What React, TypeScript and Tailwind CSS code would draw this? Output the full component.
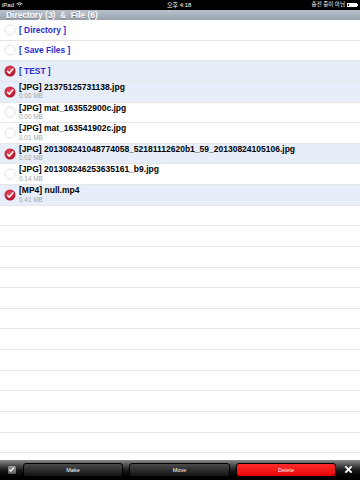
const font = { fontFamily: '"Liberation Sans", "Noto Sans CJK KR", Arial, sans-serif' };

type Row = { kind: "dir" | "file" | "empty"; name?: string; size?: string; checked?: boolean };

const rows: Row[] = [
  { kind: "dir", name: "[ Directory ]" },
  { kind: "dir", name: "[ Save Files ]" },
  { kind: "dir", name: "[ TEST ]", checked: true },
  { kind: "file", name: "[JPG] 21375125731138.jpg", size: "0.00 MB", checked: true },
  { kind: "file", name: "[JPG] mat_163552900c.jpg", size: "0.00 MB" },
  { kind: "file", name: "[JPG] mat_163541902c.jpg", size: "0.01 MB" },
  { kind: "file", name: "[JPG] 201308241048774058_52181112620b1_59_20130824105106.jpg", size: "0.02 MB", checked: true },
  { kind: "file", name: "[JPG] 201308246253635161_b9.jpg", size: "0.14 MB" },
  { kind: "file", name: "[MP4] null.mp4", size: "6.41 MB", checked: true },
  ...Array.from({ length: 14 }, () => ({ kind: "empty" as const })),
];

function CheckCircle({ checked }: { checked?: boolean }) {
  if (!checked) {
    return (
      <svg width="12" height="12" viewBox="0 0 12 12">
        <circle cx="6" cy="6" r="5" fill="#fff" stroke="#d6d6d6" strokeWidth="0.8" />
      </svg>
    );
  }
  return (
    <svg width="12" height="12" viewBox="0 0 12 12">
      <defs>
        <radialGradient id="rg" cx="45%" cy="35%" r="65%">
          <stop offset="0%" stopColor="#e8485a" />
          <stop offset="100%" stopColor="#b0122a" />
        </radialGradient>
      </defs>
      <circle cx="6" cy="6" r="5.5" fill="url(#rg)" />
      <path d="M3.4 6.2 L5.3 8.1 L8.8 3.9" fill="none" stroke="#fff" strokeWidth="1.5" strokeLinecap="round" strokeLinejoin="round" />
    </svg>
  );
}

function StatusBar() {
  return (
    <div className="h-[9.5px] bg-black flex items-center justify-between px-[2px] text-white text-[6px] leading-none relative">
      <div className="flex items-center gap-[2px]">
        <span>iPad</span>
        <svg width="7" height="5" viewBox="0 0 14 10">
          <path d="M1 4 Q7 -1.5 13 4" fill="none" stroke="#fff" strokeWidth="1.6" />
          <path d="M3.5 6 Q7 3 10.5 6" fill="none" stroke="#fff" strokeWidth="1.6" />
          <path d="M5.6 8 L7 9.5 L8.4 8 Q7 6.8 5.6 8 Z" fill="#fff" />
        </svg>
      </div>
      <span className="absolute left-[167px]">오후 4:18</span>
      <div className="flex items-center gap-[2px]">
        <span className="text-[5.5px]">충전 중이 아님</span>
        <div className="flex items-center">
          <div className="w-[10px] h-[4.5px] border border-white p-[0.5px]">
            <div className="w-full h-full bg-white" />
          </div>
          <div className="w-[1px] h-[2px] bg-white" />
        </div>
      </div>
    </div>
  );
}

function Toolbar() {
  const btn = "h-[14px] rounded-[3px] flex items-center justify-center text-white text-[5.5px] border border-black";
  return (
    <div className="h-[20.5px] bg-gradient-to-b from-[#8a8a8a] via-[#1c1c1c] to-black flex items-center">
      <div className="w-[23px] flex justify-center">
        <div className="w-[8px] h-[8px] rounded-[1.5px] bg-gradient-to-b from-[#9a9a9a] to-[#5e5e5e] flex items-center justify-center">
          <svg width="7" height="7" viewBox="0 0 10 10">
            <path d="M2 5.2 L4.2 7.4 L8.4 2.4" fill="none" stroke="#fff" strokeWidth="1.8" />
          </svg>
        </div>
      </div>
      <div className={`${btn} w-[100px] bg-gradient-to-b from-[#4a4a4a] to-[#141414]`}>Make</div>
      <div className={`${btn} w-[101px] ml-[6px] bg-gradient-to-b from-[#4a4a4a] to-[#141414]`}>Move</div>
      <div className={`${btn} w-[100px] ml-[6px] bg-gradient-to-b from-[#ff2a2a] to-[#e60000] border-[#900]`}>Delete</div>
      <div className="flex-1 flex justify-center">
        <svg width="9" height="9" viewBox="0 0 10 10">
          <path d="M1.5 1.5 L8.5 8.5 M8.5 1.5 L1.5 8.5" stroke="#fff" strokeWidth="2" />
        </svg>
      </div>
    </div>
  );
}

export default function App() {
  return (
    <div className="w-[360px] h-[480px] flex flex-col bg-white overflow-hidden" style={font}>
      <StatusBar />
      <div className="h-[10.5px] bg-gradient-to-b from-[#b9c2cc] to-[#97a2ae] flex items-center px-[6px]">
        <span className="text-[8.4px] font-bold text-white leading-none whitespace-pre [text-shadow:0_0.5px_0_rgba(0,0,0,0.25)]">
          Directory (3)  &  File (6)
        </span>
      </div>
      <div className="flex-1 overflow-hidden">
        {rows.map((r, i) => (
          <div
            key={i}
            className={`h-[20.625px] border-b border-[#e6e6e6] flex items-center ${r.checked ? "bg-[#e8eef9]" : "bg-white"}`}
          >
            {r.kind !== "empty" && (
              <div className="w-[19px] flex justify-center pl-[1px]">
                <CheckCircle checked={r.checked} />
              </div>
            )}
            {r.kind === "dir" && (
              <span className="text-[8.4px] font-bold text-[#2a2ad0] leading-none whitespace-nowrap">{r.name}</span>
            )}
            {r.kind === "file" && (
              <div className="flex flex-col pb-[1px]">
                <span className="text-[8.5px] font-bold text-black leading-[9.5px] whitespace-nowrap">{r.name}</span>
                <span className="text-[6.4px] text-[#a3a3a3] leading-[7px]">{r.size}</span>
              </div>
            )}
          </div>
        ))}
      </div>
      <Toolbar />
    </div>
  );
}
